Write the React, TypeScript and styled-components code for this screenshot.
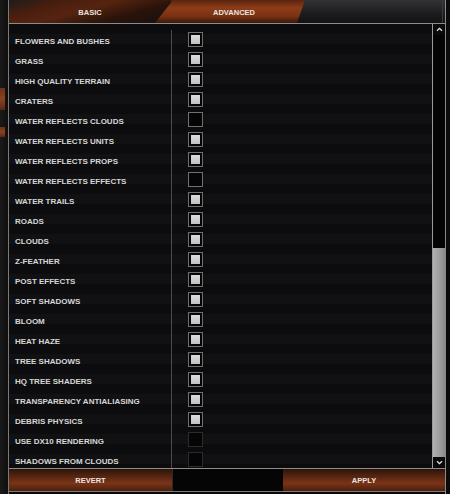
import React from 'react';
import styled, { createGlobalStyle } from 'styled-components';

const GlobalStyle = createGlobalStyle`
    html, body {
        margin: 0;
        padding: 0;
        background: #0b0b0c;
    }
    body {
        font-family: "Liberation Sans", Arial, sans-serif;
    }
`;

// Options shown in the advanced list
const options: { label: string; checked: boolean; disabled?: boolean }[] = [
    { label: 'FLOWERS AND BUSHES', checked: true },
    { label: 'GRASS', checked: true },
    { label: 'HIGH QUALITY TERRAIN', checked: true },
    { label: 'CRATERS', checked: true },
    { label: 'WATER REFLECTS CLOUDS', checked: false },
    { label: 'WATER REFLECTS UNITS', checked: true },
    { label: 'WATER REFLECTS PROPS', checked: true },
    { label: 'WATER REFLECTS EFFECTS', checked: false },
    { label: 'WATER TRAILS', checked: true },
    { label: 'ROADS', checked: true },
    { label: 'CLOUDS', checked: true },
    { label: 'Z-FEATHER', checked: true },
    { label: 'POST EFFECTS', checked: true },
    { label: 'SOFT SHADOWS', checked: true },
    { label: 'BLOOM', checked: true },
    { label: 'HEAT HAZE', checked: true },
    { label: 'TREE SHADOWS', checked: true },
    { label: 'HQ TREE SHADERS', checked: true },
    { label: 'TRANSPARENCY ANTIALIASING', checked: true },
    { label: 'DEBRIS PHYSICS', checked: true },
    { label: 'USE DX10 RENDERING', checked: false, disabled: true },
    { label: 'SHADOWS FROM CLOUDS', checked: false, disabled: true },
];

const Screen = styled.div`
    display: flex;
    width: 450px;
    height: 494px;
    overflow: hidden;
    background: #0b0b0c;
`;

const SideStrip = styled.div`
    width: 8px;
    display: flex;
    flex-direction: column;
    background: linear-gradient(90deg, #1a1a1b, #0e0e0f);
`;

const SideNub = styled.div<{ top: number; height: number }>`
    margin-top: ${({ top }) => `${top}px`};
    width: 5px;
    height: ${({ height }) => `${height}px`};
    background: linear-gradient(180deg, #6a3218, #8a4220 50%, #5a2812);
`;

const Panel = styled.div`
    width: 438px;
    box-sizing: border-box;
    border-left: 1px solid #7a7a7a;
    border-right: 1px solid #8a8a8a;
    display: flex;
    flex-direction: column;
    background: #08080a;
`;

const TabBar = styled.div`
    height: 23px;
    display: flex;
    border-bottom: 1px solid #8c8c8c;
    background: linear-gradient(180deg, #333335, #1c1c1e 60%, #121214);
`;

const Tab = styled.div<{ active?: boolean }>`
    display: flex;
    align-items: center;
    justify-content: center;
    font-size: 7.5px;
    font-weight: 700;
    color: #e8e4e0;
    padding-top: 1px;
    ${({ active }) =>
        active
            ? `
        width: 150px;
        margin-left: -16px;
        padding-left: 8px;
        box-sizing: border-box;
        clip-path: polygon(18px 0, 100% 0, calc(100% - 8px) 100%, 0 100%);
        background: linear-gradient(180deg, #5a2410 0%, #8e3c18 35%, #7a3214 70%, #3a180a 100%);
    `
            : `
        width: 162px;
        background: linear-gradient(165deg, #1c1c1c 0%, #4a1e0e 25%, #55240f 45%, #2a130a 70%, #151010 100%);
    `}
`;

const TabFill = styled.div`
    flex: 1;
    border-right: 1px solid #3a3a3a;
    margin-right: 2px;
`;

const Body = styled.div`
    height: 444px;
    display: flex;
`;

const List = styled.div`
    flex: 1;
    overflow: hidden;
    padding-top: 6px;
    background: repeating-linear-gradient(180deg, #0c0c0e 0px, #0c0c0e 10px, #111113 10px, #111113 20px);
`;

const Row = styled.div`
    display: flex;
    height: 20px;
`;

const Label = styled.div`
    width: 163px;
    box-sizing: border-box;
    padding: 3px 0 0 6px;
    display: flex;
    align-items: center;
    border-right: 1px solid #4a4a4c;
    font-size: 8px;
    font-weight: 700;
    color: #d6d6d6;
    white-space: nowrap;
`;

const BoxCell = styled.div`
    padding: 2px 0 0 16px;
`;

const Box = styled.div<{ checked: boolean; disabled?: boolean }>`
    width: 15px;
    height: 15px;
    box-sizing: border-box;
    border: 1px solid ${({ disabled }) => (disabled ? '#2c2c2e' : '#707070')};
    background: #050505;
    padding: 2px;

    &::after {
        content: '';
        display: ${({ checked }) => (checked ? 'block' : 'none')};
        width: 100%;
        height: 100%;
        background: linear-gradient(180deg, #dcdcdc, #c2c2c2);
    }
`;

const Scrollbar = styled.div`
    width: 12px;
    border-left: 1px solid #9a9a9a;
    display: flex;
    flex-direction: column;
    background: #040404;
`;

const ArrowButton = styled.div`
    height: 11px;
    display: flex;
    align-items: center;
    justify-content: center;
    background: #0a0a0a;
`;

const Track = styled.div`
    flex: 1;
    display: flex;
    flex-direction: column;
`;

const Thumb = styled.div`
    margin-top: auto;
    height: 209px;
    background: linear-gradient(90deg, #b0b0b0, #9c9c9c 60%, #8a8a8a);
`;

const Footer = styled.div`
    height: 22px;
    display: flex;
    border-top: 1px solid #8c8c8c;
    border-bottom: 1px solid #7a7a7a;
`;

const FooterButton = styled.div<{ width: number }>`
    width: ${({ width }) => `${width}px`};
    display: flex;
    align-items: center;
    justify-content: center;
    font-size: 7.5px;
    font-weight: 700;
    color: #ece6e0;
    background: linear-gradient(180deg, #2a140a 0%, #5e2812 40%, #7a3416 65%, #4a200e 100%);
`;

const FooterGap = styled.div`
    flex: 1;
    background: #050505;
    border-left: 1px solid #2a2a2a;
`;

const Chevron = ({ down }: { down?: boolean }) => (
    <svg width="7" height="5" viewBox="0 0 7 5">
        <path
            d={down ? 'M1 1.2 L3.5 3.6 L6 1.2' : 'M1 3.8 L3.5 1.4 L6 3.8'}
            fill="none"
            stroke="#e6e6e6"
            strokeWidth="1.3"
        />
    </svg>
);

const App: React.FC = () => (
    <>
        <GlobalStyle />
        <Screen>
            <SideStrip>
                <SideNub top={88} height={22} />
                <SideNub top={17} height={10} />
            </SideStrip>
            <Panel>
                <TabBar>
                    <Tab>BASIC</Tab>
                    <Tab active>ADVANCED</Tab>
                    <TabFill />
                </TabBar>
                <Body>
                    <List>
                        {options.map((o) => (
                            <Row key={o.label}>
                                <Label>{o.label}</Label>
                                <BoxCell>
                                    <Box checked={o.checked} disabled={o.disabled} />
                                </BoxCell>
                            </Row>
                        ))}
                    </List>
                    <Scrollbar>
                        <ArrowButton>
                            <Chevron />
                        </ArrowButton>
                        <Track>
                            <Thumb />
                        </Track>
                        <ArrowButton>
                            <Chevron down />
                        </ArrowButton>
                    </Scrollbar>
                </Body>
                <Footer>
                    <FooterButton width={163}>REVERT</FooterButton>
                    <FooterGap />
                    <FooterButton width={162}>APPLY</FooterButton>
                </Footer>
            </Panel>
        </Screen>
    </>
);

export default App;
